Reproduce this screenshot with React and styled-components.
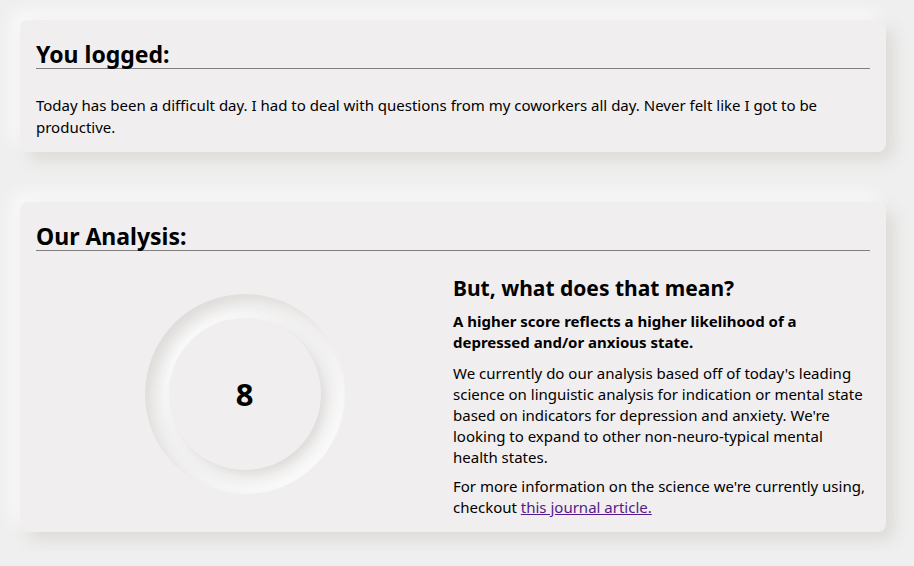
import React from "react";
import styled, { createGlobalStyle } from "styled-components";

const GlobalStyle = createGlobalStyle`
  body {
    margin: 0;
    background: #efefef;
    font-family: "Noto Sans", "Open Sans", sans-serif;
    color: #000;
  }
`;

const Page = styled.div`
  padding: 20px 28px 20px 20px;
  display: flex;
  flex-direction: column;
  gap: 50px;
`;

const Card = styled.section`
  background: #f0eeef;
  border-radius: 8px;
  padding: 16px 16px 14px;
  box-shadow: 8px 8px 16px #dcdbd7, -8px -8px 16px #fafafa;
`;

const Heading = styled.h2`
  margin: 0;
  padding-top: 4px;
  font-size: 23px;
  line-height: 28px;
  font-weight: 700;
  border-bottom: 1px solid #808080;
`;

const Entry = styled.p`
  margin: 25px 0 0;
  font-size: 15px;
  line-height: 22px;
`;

const Columns = styled.div`
  display: grid;
  grid-template-columns: 1fr 1fr;
`;

const ScoreCell = styled.div`
  display: flex;
  align-items: center;
  justify-content: center;
  padding-top: 18px;
`;

const Ring = styled.div`
  width: 200px;
  height: 200px;
  border-radius: 50%;
  display: flex;
  align-items: center;
  justify-content: center;
  background: #f1f0f0;
  box-shadow: inset 6px 6px 12px #dedcd9, inset -6px -6px 12px #fbfbfb;
`;

const Dial = styled.div`
  width: 152px;
  height: 152px;
  border-radius: 50%;
  display: flex;
  align-items: center;
  justify-content: center;
  background: #f0eeef;
  box-shadow: 4px 4px 8px #dedcd9, -4px -4px 8px #fbfbfb;
  font-size: 31px;
  font-weight: 700;
`;

const Explain = styled.div`
  padding-top: 22px;
`;

const SubHeading = styled.h3`
  margin: 0 0 8px;
  font-size: 21px;
  line-height: 30px;
  font-weight: 700;
`;

const Text = styled.p`
  margin: 0 0 ${(p) => (p.$bold ? "10px" : "8px")};
  line-height: 21px;
  font-weight: ${(p) => (p.$bold ? 700 : 400)};
  font-size: 15px;
  &:last-child {
    margin-bottom: 0;
  }
`;

const Link = styled.a`
  color: #551a8b;
  text-decoration: underline;
`;

export default function App() {
  return (
    <>
      <GlobalStyle />
      <Page>
        <Card>
          <Heading>You logged:</Heading>
          <Entry>
            Today has been a difficult day. I had to deal with questions from my
            coworkers all day. Never felt like I got to be productive.
          </Entry>
        </Card>
        <Card>
          <Heading>Our Analysis:</Heading>
          <Columns>
            <ScoreCell>
              <Ring>
                <Dial>8</Dial>
              </Ring>
            </ScoreCell>
            <Explain>
              <SubHeading>But, what does that mean?</SubHeading>
              <Text $bold>
                A higher score reflects a higher likelihood of a depressed and/or
                anxious state.
              </Text>
              <Text>
                We currently do our analysis based off of today's leading science
                on linguistic analysis for indication or mental state based on
                indicators for depression and anxiety. We're looking to expand to
                other non-neuro-typical mental health states.
              </Text>
              <Text>
                For more information on the science we're currently using,
                checkout <Link href="#">this journal article.</Link>
              </Text>
            </Explain>
          </Columns>
        </Card>
      </Page>
    </>
  );
}
